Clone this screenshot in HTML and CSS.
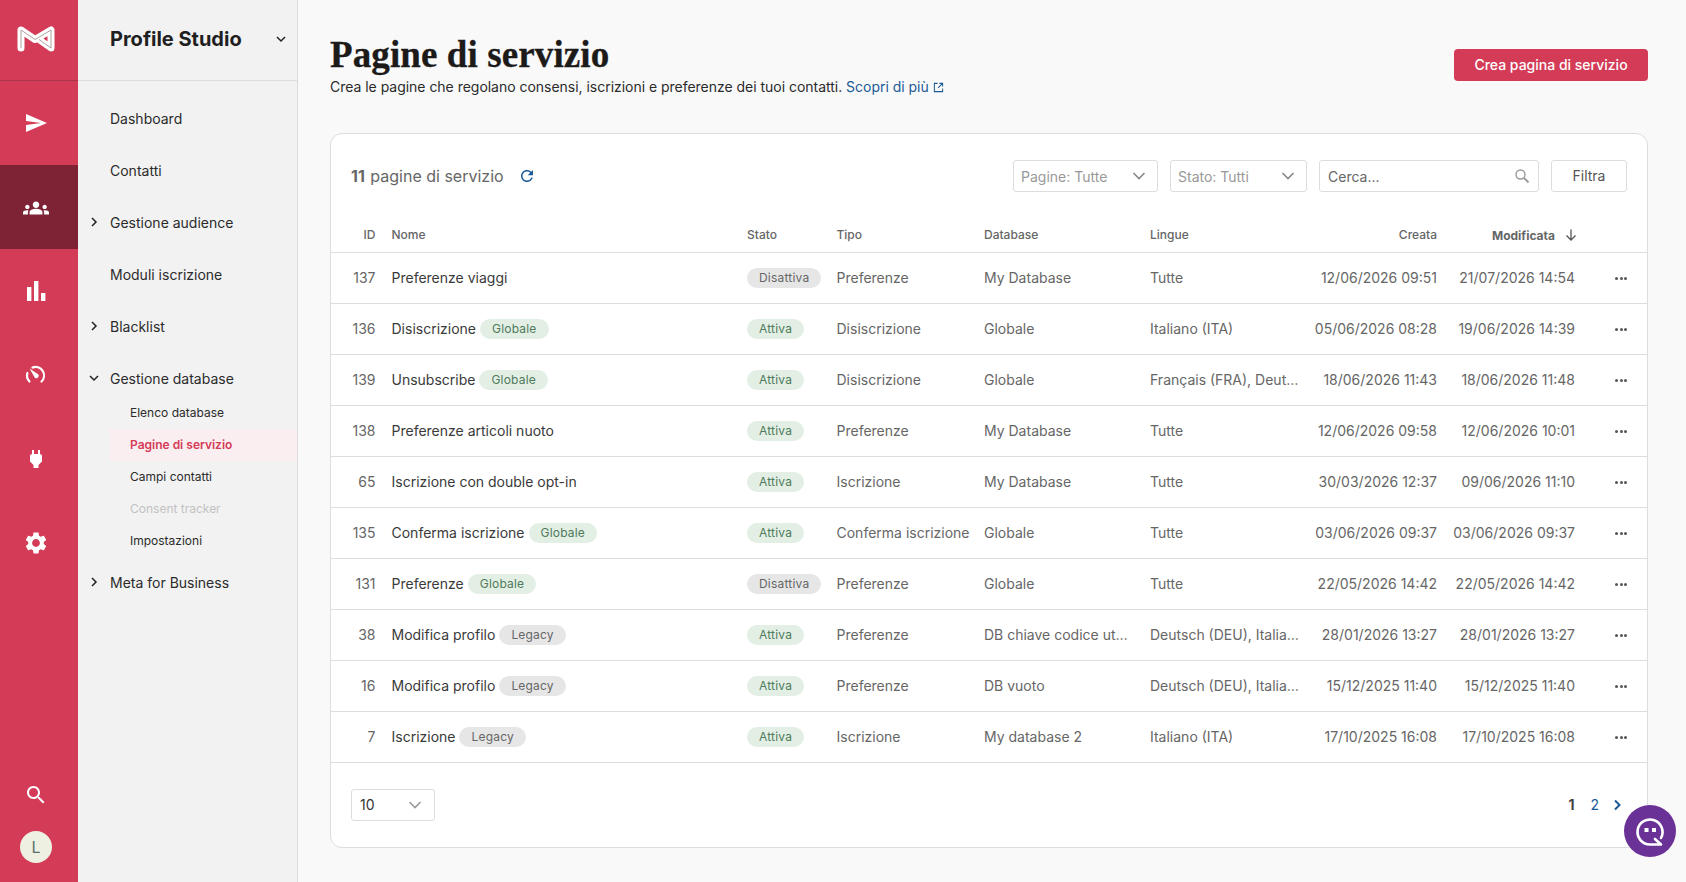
FILE: index.html
```html
<!DOCTYPE html>
<html lang="it">
<head>
	<meta charset="UTF-8">
	<title>Pagine di servizio</title>
	<link rel="stylesheet" href="styles.css">
</head>
<body>
<div class="app">
	<!-- barra icone -->
	<div class="rail">
		<div class="rail-logo">
			<svg viewBox="0 0 38 28" width="38" height="28"><path d="M4 23V5L18 14.500L34 5V23L22 14.500" fill="none" stroke="#fff" stroke-width="7" stroke-linejoin="round" stroke-linecap="round"/><path d="M4 23V5L18 14.500L34 5V23L22 14.500" fill="none" stroke="#9a8a8e" stroke-width=".8"/><circle cx="29" cy="14" r="1" fill="#d33b57"/></svg>
		</div>
		<div class="rail-item"><svg viewBox="0 0 24 24" width="24" height="24"><path d="M2.01 21L23 12 2.01 3 2 10l15 2-15 2z"/></svg></div>
		<div class="rail-item active"><svg viewBox="0 0 24 24" width="26" height="26"><path d="M12 12.75c1.63 0 3.07.39 4.24.9 1.08.48 1.76 1.56 1.76 2.73V18H6v-1.61c0-1.18.68-2.26 1.76-2.73 1.17-.52 2.61-.91 4.24-.91zM4 13c1.1 0 2-.9 2-2s-.9-2-2-2-2 .9-2 2 .9 2 2 2zm1.13 1.1C4.76 14.04 4.39 14 4 14c-.99 0-1.93.21-2.78.58C.48 14.9 0 15.62 0 16.43V18h4.5v-1.61c0-.83.23-1.61.63-2.29zM20 13c1.1 0 2-.9 2-2s-.9-2-2-2-2 .9-2 2 .9 2 2 2zm4 3.43c0-.81-.48-1.53-1.22-1.85C21.93 14.21 20.99 14 20 14c-.39 0-.76.04-1.13.1.4.68.63 1.46.63 2.29V18H24v-1.57zM12 6c1.66 0 3 1.34 3 3s-1.34 3-3 3-3-1.34-3-3 1.34-3 3-3z"/></svg></div>
		<div class="rail-item"><svg viewBox="0 0 24 24" width="24" height="24"><path d="M3 8h4.400v14H3zM10 2h4.400v20H10zM17 14h4.400v8H17z"/></svg></div>
		<div class="rail-item"><svg viewBox="0 0 24 24" width="24" height="24"><path d="M5.500 18.500A8.500 8.500 0 0 1 3.400 10M8.500 4.500A8.500 8.500 0 0 1 17.500 18.500" fill="none" stroke="#fff" stroke-width="2.200" stroke-linecap="round"/><path d="M5.500 5.500L14.500 11.500A2.600 2.600 0 0 1 11 15Z"/></svg></div>
		<div class="rail-item"><svg viewBox="0 0 24 24" width="24" height="24"><path d="M16.01 7L16 3h-2v4h-4V3H8v4h-.01C7 6.99 6 7.990 6 8.990v5.490L9.500 18v3h5v-3l3.500-3.510v-5.500c0-1-1-2-1.990-1.990z"/></svg></div>
		<div class="rail-item"><svg viewBox="0 0 24 24" width="26" height="26"><path d="M19.14 12.94c.04-.3.06-.61.06-.94 0-.32-.02-.64-.07-.94l2.03-1.58c.18-.14.23-.41.12-.61l-1.92-3.32c-.12-.22-.37-.29-.59-.22l-2.39.96c-.5-.38-1.03-.7-1.62-.94l-.36-2.54c-.04-.24-.24-.41-.48-.41h-3.84c-.24 0-.43.17-.47.41l-.36 2.54c-.59.24-1.13.57-1.62.94l-2.39-.96c-.22-.08-.47 0-.59.22L2.74 8.87c-.12.21-.08.47.12.61l2.03 1.58c-.05.3-.09.63-.09.94s.02.64.07.94l-2.03 1.58c-.18.14-.23.41-.12.61l1.92 3.32c.12.22.37.29.59.22l2.39-.96c.5.38 1.03.7 1.62.94l.36 2.54c.05.24.24.41.48.41h3.84c.24 0 .44-.17.47-.41l.36-2.54c.59-.24 1.13-.56 1.62-.94l2.39.96c.22.08.47 0 .59-.22l1.92-3.32c.12-.22.07-.47-.12-.61l-2.01-1.58zM12 15.6c-1.98 0-3.6-1.62-3.6-3.6s1.62-3.6 3.6-3.6 3.6 1.62 3.6 3.6-1.62 3.6-3.6 3.6z"/></svg></div>
		<div class="rail-bottom">
			<svg viewBox="0 0 24 24" width="24" height="24"><path d="M15.5 14h-.79l-.28-.27C15.41 12.59 16 11.11 16 9.5 16 5.91 13.09 3 9.5 3S3 5.91 3 9.5 5.91 16 9.5 16c1.61 0 3.09-.59 4.23-1.57l.27.28v.79l5 4.99L20.49 19l-4.99-5zm-6 0C7.01 14 5 11.99 5 9.5S7.01 5 9.5 5 14 7.01 14 9.5 11.99 14 9.5 14z"/></svg>
			<div class="avatar">L</div>
		</div>
	</div>

	<!-- menu laterale -->
	<div class="sidebar">
		<div class="side-head">
			<span>Profile Studio</span>
			<svg viewBox="0 0 12 12" width="12" height="12"><path d="M2 4l4 4 4-4" fill="none" stroke="#222" stroke-width="1.5"/></svg>
		</div>
		<div class="nav">
			<div class="nav-item">Dashboard</div>
			<div class="nav-item">Contatti</div>
			<div class="nav-item"><svg class="caret" viewBox="0 0 12 12" width="12" height="12"><path d="M4 2l4 4-4 4" fill="none" stroke="#222" stroke-width="1.5"/></svg>Gestione audience</div>
			<div class="nav-item">Moduli iscrizione</div>
			<div class="nav-item"><svg class="caret" viewBox="0 0 12 12" width="12" height="12"><path d="M4 2l4 4-4 4" fill="none" stroke="#222" stroke-width="1.5"/></svg>Blacklist</div>
			<div class="nav-item"><svg class="caret" viewBox="0 0 12 12" width="12" height="12"><path d="M2 4l4 4 4-4" fill="none" stroke="#222" stroke-width="1.5"/></svg>Gestione database</div>
			<div class="subnav">
				<div class="sub-item">Elenco database</div>
				<div class="sub-item current">Pagine di servizio</div>
				<div class="sub-item">Campi contatti</div>
				<div class="sub-item disabled">Consent tracker</div>
				<div class="sub-item">Impostazioni</div>
			</div>
			<div class="nav-item"><svg class="caret" viewBox="0 0 12 12" width="12" height="12"><path d="M4 2l4 4-4 4" fill="none" stroke="#222" stroke-width="1.5"/></svg>Meta for Business</div>
		</div>
	</div>

	<!-- contenuto -->
	<div class="main">
		<div class="page-head">
			<div>
				<h1>Pagine di servizio</h1>
				<p class="intro">Crea le pagine che regolano consensi, iscrizioni e preferenze dei tuoi contatti. <a class="link">Scopri di più<svg class="ext" viewBox="0 0 12 12" width="11" height="11"><path d="M5 1.500H1.500v9h9V7M7 1.500h3.500V5M10.500 1.500L5.500 6.500" fill="none" stroke="#1c5a96" stroke-width="1.100"/></svg></a></p>
			</div>
			<button class="btn-primary">Crea pagina di servizio</button>
		</div>

		<div class="card">
			<div class="toolbar">
				<div class="count"><b>11</b> pagine di servizio</div>
				<svg class="refresh" viewBox="0 0 24 24" width="18" height="18"><path d="M17.65 6.35C16.2 4.9 14.21 4 12 4c-4.42 0-7.99 3.58-7.99 8s3.57 8 7.99 8c3.73 0 6.84-2.55 7.73-6h-2.08c-.82 2.33-3.04 4-5.65 4-3.31 0-6-2.69-6-6s2.69-6 6-6c1.66 0 3.14.69 4.22 1.78L13 11h7V4l-2.35 2.35z"/></svg>
				<div class="filters">
					<div class="field sel-pagine"><span>Pagine: Tutte</span><svg viewBox="0 0 14 14" width="14" height="14"><path d="M1.500 4l5.500 5.500L12.500 4" fill="none" stroke="#888" stroke-width="1.600"/></svg></div>
					<div class="field sel-stato"><span>Stato: Tutti</span><svg viewBox="0 0 14 14" width="14" height="14"><path d="M1.500 4l5.500 5.500L12.500 4" fill="none" stroke="#888" stroke-width="1.600"/></svg></div>
					<div class="field search"><span>Cerca...</span><svg viewBox="0 0 16 16" width="16" height="16"><circle cx="6.500" cy="6.500" r="4.500" fill="none" stroke="#999" stroke-width="1.400"/><path d="M10 10l4.500 4.500" stroke="#999" stroke-width="1.800"/></svg></div>
					<button class="btn-filter">Filtra</button>
				</div>
			</div>

			<table class="grid">
				<colgroup>
					<col class="c-id"><col class="c-name"><col class="c-state"><col class="c-type"><col class="c-db"><col class="c-lang"><col class="c-date"><col class="c-date2"><col class="c-menu">
				</colgroup>
				<thead>
					<tr>
						<th class="num">ID</th><th>Nome</th><th>Stato</th><th>Tipo</th><th>Database</th><th>Lingue</th><th class="num">Creata</th>
						<th class="num sorted"><span>Modificata</span><svg viewBox="0 0 14 14" width="14" height="14"><path d="M7 1.500v10.500M2.500 7.500L7 12l4.500-4.500" fill="none" stroke="#555" stroke-width="1.300"/></svg></th>
						<th></th>
					</tr>
				</thead>
				<tbody>
					<tr><td class="num">137</td><td class="name">Preferenze viaggi</td><td><span class="pill off">Disattiva</span></td><td>Preferenze</td><td>My Database</td><td>Tutte</td><td class="num">12/06/2026 09:51</td><td class="num">21/07/2026 14:54</td><td class="more"><i></i><i></i><i></i></td></tr>
					<tr><td class="num">136</td><td class="name">Disiscrizione<span class="pill on tag">Globale</span></td><td><span class="pill on">Attiva</span></td><td>Disiscrizione</td><td>Globale</td><td>Italiano (ITA)</td><td class="num">05/06/2026 08:28</td><td class="num">19/06/2026 14:39</td><td class="more"><i></i><i></i><i></i></td></tr>
					<tr><td class="num">139</td><td class="name">Unsubscribe<span class="pill on tag">Globale</span></td><td><span class="pill on">Attiva</span></td><td>Disiscrizione</td><td>Globale</td><td>Français (FRA), Deut…</td><td class="num">18/06/2026 11:43</td><td class="num">18/06/2026 11:48</td><td class="more"><i></i><i></i><i></i></td></tr>
					<tr><td class="num">138</td><td class="name">Preferenze articoli nuoto</td><td><span class="pill on">Attiva</span></td><td>Preferenze</td><td>My Database</td><td>Tutte</td><td class="num">12/06/2026 09:58</td><td class="num">12/06/2026 10:01</td><td class="more"><i></i><i></i><i></i></td></tr>
					<tr><td class="num">65</td><td class="name">Iscrizione con double opt-in</td><td><span class="pill on">Attiva</span></td><td>Iscrizione</td><td>My Database</td><td>Tutte</td><td class="num">30/03/2026 12:37</td><td class="num">09/06/2026 11:10</td><td class="more"><i></i><i></i><i></i></td></tr>
					<tr><td class="num">135</td><td class="name">Conferma iscrizione<span class="pill on tag">Globale</span></td><td><span class="pill on">Attiva</span></td><td>Conferma iscrizione</td><td>Globale</td><td>Tutte</td><td class="num">03/06/2026 09:37</td><td class="num">03/06/2026 09:37</td><td class="more"><i></i><i></i><i></i></td></tr>
					<tr><td class="num">131</td><td class="name">Preferenze<span class="pill on tag">Globale</span></td><td><span class="pill off">Disattiva</span></td><td>Preferenze</td><td>Globale</td><td>Tutte</td><td class="num">22/05/2026 14:42</td><td class="num">22/05/2026 14:42</td><td class="more"><i></i><i></i><i></i></td></tr>
					<tr><td class="num">38</td><td class="name">Modifica profilo<span class="pill off tag">Legacy</span></td><td><span class="pill on">Attiva</span></td><td>Preferenze</td><td>DB chiave codice ut…</td><td>Deutsch (DEU), Italia…</td><td class="num">28/01/2026 13:27</td><td class="num">28/01/2026 13:27</td><td class="more"><i></i><i></i><i></i></td></tr>
					<tr><td class="num">16</td><td class="name">Modifica profilo<span class="pill off tag">Legacy</span></td><td><span class="pill on">Attiva</span></td><td>Preferenze</td><td>DB vuoto</td><td>Deutsch (DEU), Italia…</td><td class="num">15/12/2025 11:40</td><td class="num">15/12/2025 11:40</td><td class="more"><i></i><i></i><i></i></td></tr>
					<tr><td class="num">7</td><td class="name">Iscrizione<span class="pill off tag">Legacy</span></td><td><span class="pill on">Attiva</span></td><td>Iscrizione</td><td>My database 2</td><td>Italiano (ITA)</td><td class="num">17/10/2025 16:08</td><td class="num">17/10/2025 16:08</td><td class="more"><i></i><i></i><i></i></td></tr>
				</tbody>
			</table>

			<div class="card-foot">
				<div class="field per-page"><span>10</span><svg viewBox="0 0 14 14" width="14" height="14"><path d="M1.500 4l5.500 5.500L12.500 4" fill="none" stroke="#999" stroke-width="1.600"/></svg></div>
				<div class="pager">
					<b>1</b><a>2</a>
					<svg class="next" viewBox="0 0 12 12" width="12" height="12"><path d="M4 1.500L8.500 6 4 10.500" fill="none" stroke="#1c5a96" stroke-width="2"/></svg>
				</div>
			</div>
		</div>
	</div>
</div>

<div class="chat">
	<svg viewBox="0 0 52 52" width="52" height="52"><path d="M37 33A12.500 12.500 0 1 0 26 39.500H37L31 34" fill="none" stroke="#fff" stroke-width="2.600" stroke-linecap="round" stroke-linejoin="round"/><rect x="20.500" y="23" width="4" height="4" fill="#fff"/><rect x="28" y="23" width="4" height="4" fill="#fff"/></svg>
</div>
</body>
</html>
```
FILE: styles.css
```css
* {
	box-sizing: border-box;
}
html, body {
	height: 100%;
}
body {
	margin: 0;
	font: 14px Inter, "Liberation Sans", sans-serif;
	color: #333;
	background: #f9f9f9;
	overflow: hidden;
}
svg {
	display: block;
	flex: none;
}
.app {
	display: flex;
	height: 882px;
}

/* rail */
.rail {
	width: 78px;
	flex: none;
	background: #d33b57;
	display: flex;
	flex-direction: column;
	fill: #fff;
}
.rail-logo {
	height: 81px;
	flex: none;
	border-bottom: 1px solid #a9344c;
	display: flex;
	align-items: center;
	justify-content: center;
	padding: 0 6px 2px 0;
}
.rail-item {
	height: 84px;
	flex: none;
	display: flex;
	align-items: center;
	justify-content: center;
	padding-right: 6px;
}
.rail-item.active {
	background: #7d2335;
	padding-top: 2px;
}
.rail-bottom {
	margin-top: auto;
	padding: 0 6px 19px 0;
	display: flex;
	flex-direction: column;
	align-items: center;
	gap: 24px;
}
.avatar {
	width: 32px;
	height: 32px;
	border-radius: 50%;
	background: #eef0e2;
	color: #56706c;
	font-size: 16px;
	line-height: 32px;
	text-align: center;
}

/* sidebar */
.sidebar {
	width: 220px;
	flex: none;
	background: #f2f2f2;
	border-right: 1px solid #ddd;
}
.side-head {
	height: 81px;
	border-bottom: 1px solid #ddd;
	display: flex;
	align-items: center;
	justify-content: space-between;
	padding: 0 10px 2px 32px;
	font-size: 20px;
	font-weight: 700;
	color: #1f1f1f;
}
.nav {
	padding-top: 12px;
}
.nav-item {
	height: 52px;
	display: flex;
	align-items: center;
	padding: 0 0 2px 32px;
	color: #2b2b2b;
}
.caret {
	margin-left: -22px;
	margin-right: 10px;
}
.subnav {
	margin-top: -8px;
	padding-left: 32px;
}
.sub-item {
	height: 32px;
	line-height: 32px;
	padding-left: 20px;
	font-size: 12px;
	color: #2b2b2b;
}
.sub-item.current {
	background: #fbeef0;
	color: #d33b57;
	font-weight: 600;
}
.sub-item.disabled {
	color: #c2c2c2;
}

/* main */
.main {
	flex: 1;
	padding: 0 38px 0 32px;
	min-width: 0;
}
.page-head {
	height: 133px;
	display: flex;
	justify-content: space-between;
	align-items: flex-start;
}
h1 {
	margin: 34px 0 0;
	font: 700 37px/42px "Liberation Serif", serif;
	letter-spacing: .1px;
	-webkit-text-stroke: .3px #1d1b1a;
	color: #1d1b1a;
}
.intro {
	margin: 1px 0 0;
	line-height: 20px;
	letter-spacing: -.025px;
	color: #2b2b2b;
}
.link {
	color: #1c5a96;
}
.ext {
	display: inline-block;
	margin-left: 4px;
	vertical-align: -1px;
}
.btn-primary {
	margin-top: 49px;
	width: 194px;
	height: 32px;
	padding: 0 0 1px;
	border: 0;
	border-radius: 4px;
	background: #d33b57;
	color: #fff;
	font: 500 14px Inter, sans-serif;
}

.card {
	height: 715px;
	background: #fff;
	border: 1px solid #ddd;
	border-radius: 12px;
}
.toolbar {
	height: 84px;
	padding: 26px 20px 0 20px;
	display: flex;
	align-items: flex-start;
}
.count {
	font-size: 16px;
	line-height: 32px;
	color: #666;
}
.count b {
	font-weight: 700;
	margin-right: 1px;
}
.refresh {
	margin: 7px 0 0 14.5px;
	fill: #1c5a96;
}
.filters {
	margin-left: auto;
	display: flex;
	gap: 12px;
}
.field {
	height: 32px;
	padding: 0 11px 0 7px;
	border: 1px solid #ddd;
	border-radius: 3px;
	background: #fff;
	display: flex;
	align-items: center;
	justify-content: space-between;
	color: #999;
}
.sel-pagine {
	width: 145px;
}
.sel-stato {
	width: 137px;
}
.search {
	width: 220px;
	padding-left: 8px;
	padding-right: 8px;
	color: #666;
}
.btn-filter {
	width: 76px;
	height: 32px;
	padding: 0 0 1px;
	border: 1px solid #ddd;
	border-radius: 3px;
	background: #fff;
	color: #555;
	font: 14px Inter, sans-serif;
}

/* tabella */
.grid {
	width: 100%;
	table-layout: fixed;
	border-collapse: collapse;
}
.c-id { width: 52.5px; }
.c-name { width: 355.5px; }
.c-state { width: 89.5px; }
.c-type { width: 147.5px; }
.c-db { width: 166px; }
.c-lang { width: 164px; }
.c-date { width: 139px; }
.c-date2 { width: 138px; }
.grid th, .grid td {
	padding: 0 2px 0 8px;
	text-align: left;
	border-bottom: 1px solid #ddd;
	white-space: nowrap;
}
.grid th {
	height: 34px;
	font-size: 12px;
	font-weight: 500;
	color: #666;
}
.grid td {
	height: 51px;
	line-height: 20px;
	color: #666;
}
.grid .num {
	text-align: right;
	padding-right: 8px;
}
.grid .name {
	color: #3a3a3a;
	font-weight: 425;
}
.grid .sorted {
	font-weight: 700;
	padding-right: 5px;
}
.sorted span, .sorted svg {
	display: inline-block;
	vertical-align: middle;
}
.sorted svg {
	margin-left: 9px;
}
.pill {
	display: inline-block;
	height: 20px;
	line-height: 20px;
	padding: 0 12px;
	border-radius: 10px;
	font-size: 12px;
	font-weight: 400;
	letter-spacing: .2px;
	vertical-align: top;
}
.pill.on {
	background: #e3efe5;
	color: #4f7a5b;
}
.pill.off {
	background: #e6e6e6;
	color: #666;
}
.pill.tag {
	margin-left: 4px;
}
.grid .more {
	padding: 0 0 0 32px;
}
.more i {
	display: inline-block;
	width: 3px;
	height: 3px;
	margin-right: 1.5px;
	border-radius: 50%;
	background: #555;
	vertical-align: middle;
}

.card-foot {
	display: flex;
	justify-content: space-between;
	align-items: center;
	padding: 26px 24px 0 20px;
}
.per-page {
	width: 84px;
	padding: 0 12px 0 8px;
	color: #333;
}
.pager {
	display: flex;
	align-items: center;
	gap: 16px;
}
.pager b {
	color: #444;
}
.pager a {
	color: #1c5a96;
}
.next {
	margin-left: -4px;
}

.chat {
	position: fixed;
	left: 1624px;
	top: 805px;
	width: 52px;
	height: 52px;
	border-radius: 50%;
	background: #6a3296;
}
```
